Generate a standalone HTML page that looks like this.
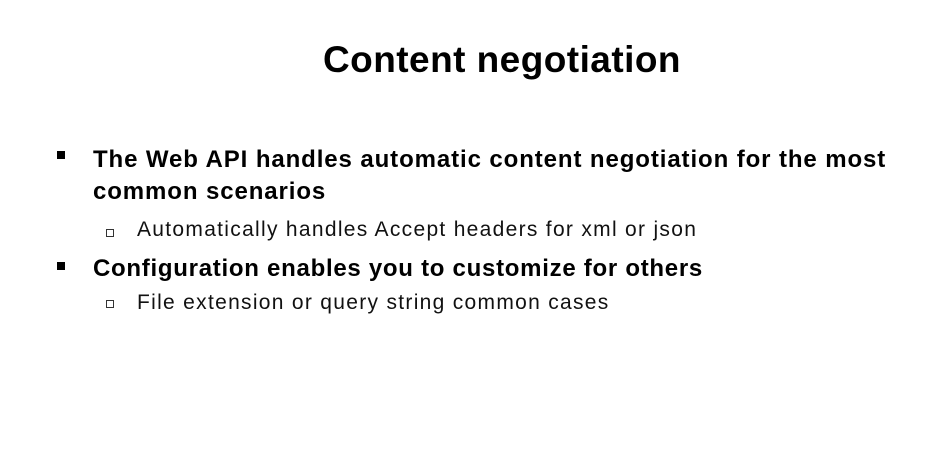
<!DOCTYPE html>
<html><head><meta charset="utf-8"><style>
body{margin:0;width:927px;height:466px;background:#fff;overflow:hidden;position:relative;font-family:"Liberation Sans",sans-serif;color:#000}
.t{position:absolute;white-space:nowrap;line-height:1}
.b{font-weight:bold;font-size:24px;letter-spacing:0.9px}
.s{font-size:21px;color:#111;letter-spacing:1.3px}
.fb{position:absolute;width:8px;height:8px;background:#000}
.hb{position:absolute;width:6px;height:6px;border:1px solid #333}
</style></head><body>
<div class="t" style="left:323px;top:41px;font-size:37px;font-weight:bold;letter-spacing:0.45px">Content negotiation</div>
<div class="fb" style="left:57px;top:151px"></div>
<div class="t b" style="left:93px;top:148px">The Web API handles automatic content negotiation for the most</div>
<div class="t b" style="left:93px;top:180px">common scenarios</div>
<div class="hb" style="left:106px;top:229px"></div>
<div class="t s" style="left:137px;top:219px">Automatically handles Accept headers for xml or json</div>
<div class="fb" style="left:57px;top:262px"></div>
<div class="t b" style="left:93px;top:257px;letter-spacing:0.72px">Configuration enables you to customize for others</div>
<div class="hb" style="left:106px;top:300px"></div>
<div class="t s" style="left:137px;top:292px">File extension or query string common cases</div>
</body></html>
